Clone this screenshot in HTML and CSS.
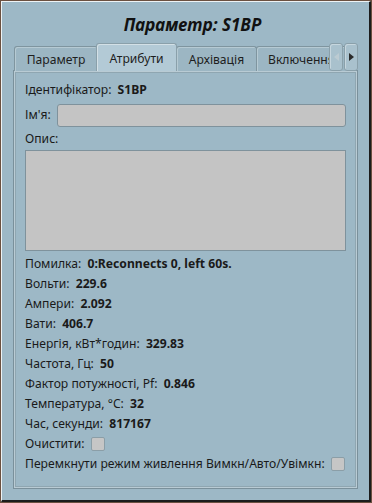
FILE: index.html
```html
<!DOCTYPE html>
<html lang="uk">
<head>
    <meta charset="UTF-8">
    <title>Параметр: S1BP</title>
    <link rel="stylesheet" href="styles.css">
</head>
<body>
    <div class="window">
        <div class="frame">
            <h1 class="title">Параметр: S1BP</h1>

            <div class="tabs">
                <div class="tab-bar">
                    <div class="tab first">Параметр</div>
                    <div class="tab active">Атрибути</div>
                    <div class="tab">Архівація</div>
                    <div class="tab clipped">Включення</div>
                    <div class="tab-scroll">
                        <button class="scroll-btn">
                            <svg width="5" height="8" viewBox="0 0 5 8"><path d="M5 0 L0 4 L5 8 Z" fill="#bccbd2"/></svg>
                        </button>
                        <button class="scroll-btn">
                            <svg width="5" height="8" viewBox="0 0 5 8"><path d="M0 0 L5 4 L0 8 Z" fill="#2a2a2a"/></svg>
                        </button>
                    </div>
                </div>

                <div class="pane">
                    <div class="row">Ідентифікатор: <b>S1BP</b></div>
                    <div class="row name-row">
                        <span>Ім'я:</span>
                        <div class="input"></div>
                    </div>
                    <div class="row">Опис:</div>
                    <div class="textarea"></div>
                    <div class="row">Помилка: <b>0:Reconnects 0, left 60s.</b></div>
                    <div class="row">Вольти: <b>229.6</b></div>
                    <div class="row">Ампери: <b>2.092</b></div>
                    <div class="row">Вати: <b>406.7</b></div>
                    <div class="row">Енергія, кВт*годин: <b>329.83</b></div>
                    <div class="row">Частота, Гц: <b>50</b></div>
                    <div class="row">Фактор потужності, Pf: <b>0.846</b></div>
                    <div class="row">Температура, °C: <b>32</b></div>
                    <div class="row">Час, секунди: <b>817167</b></div>
                    <div class="row check-row">Очистити: <span class="checkbox"></span></div>
                    <div class="row check-row">Перемкнути режим живлення Вимкн/Авто/Увімкн: <span class="checkbox"></span></div>
                </div>
            </div>
        </div>
    </div>
</body>
</html>
```

FILE: styles.css
```css
body {
    margin: 0;
    padding: 0;
    width: 372px;
    height: 503px;
    font-family: "Noto Sans", "DejaVu Sans", sans-serif;
    font-size: 12.15px;
    color: #1a1a1a;
    background: #9db8c6;
}

.window {
    width: 372px;
    height: 503px;
    box-sizing: border-box;
    border: 1px solid #6b5040;
}

.frame {
    height: 100%;
    box-sizing: border-box;
    border-top: 1px solid #eef3f5;
    border-left: 1px solid #eef3f5;
    border-right: 2px solid #1c1c1c;
    border-bottom: 2px solid #1c1c1c;
    background: #9db8c6;
    padding: 0 11px;
}

.title {
    margin: 0;
    height: 41px;
    line-height: 46px;
    padding-left: 14px;
    text-align: center;
    font-size: 17px;
    font-weight: bold;
    font-style: italic;
    color: #111;
}

/* вкладки */
.tab-bar {
    display: flex;
    align-items: flex-end;
    height: 28px;
    position: relative;
    z-index: 1;
    overflow: hidden;
}

.tab {
    flex-shrink: 0;
    height: 25px;
    box-sizing: border-box;
    width: 81px;
    margin-right: -1px;
    border: 1px solid #7f959f;
    border-bottom: none;
    border-radius: 3px 3px 0 0;
    background: #9cb6c3;
    box-shadow: inset 1px 1px 0 #b6cad3;
    text-align: center;
    line-height: 26px;
    color: #1e1e1e;
}

.tab.first {
    margin-left: 1px;
    width: 84px;
    margin-right: -2px;
}

.tab.active {
    height: 28px;
    line-height: 30px;
    width: 81px;
    background: #b3cad6;
    box-shadow: inset 1px 1px 0 #d3e0e6;
    border-color: #8aa0aa;
    position: relative;
    z-index: 2;
    margin-right: -1px;
}

.tab.clipped {
    width: 100px;
    white-space: nowrap;
    text-align: left;
    padding-left: 11px;
}

.tab-scroll {
    position: absolute;
    top: 0;
    right: 0;
    display: flex;
    gap: 1px;
    z-index: 3;
}

.scroll-btn {
    width: 14px;
    height: 28px;
    padding: 0;
    margin: 0;
    border: 1px solid #8aa0aa;
    border-radius: 3px;
    background: #a9c1cd;
    box-shadow: inset 1px 1px 0 #c6d6de;
    display: flex;
    align-items: center;
    justify-content: center;
}

.pane {
    height: 419px;
    margin-top: -1px;
    box-sizing: border-box;
    border: 1px solid #7a909b;
    box-shadow: inset 1px 1px 0 #b9cbd4, inset -1px -1px 0 #b9cbd4, inset 2px 2px 0 #8fa6b1, inset -2px -2px 0 #8fa6b1;
    padding: 9px 11px 0 11px;
}

.row {
    height: 20px;
    line-height: 20px;
    white-space: nowrap;
}

.row b {
    margin-left: 3px;
    font-weight: bold;
}

.name-row {
    display: flex;
    align-items: center;
    height: 24px;
    margin-top: 3px;
    margin-bottom: 2px;
}

.name-row span {
    width: 32px;
}

.input {
    flex: 1;
    height: 23px;
    box-sizing: border-box;
    border: 1px solid #7f929c;
    border-radius: 3px;
    background: #c4c4c4;
}

.textarea {
    height: 101px;
    box-sizing: border-box;
    border: 1px solid #7f929c;
    background: #c4c4c4;
    margin: 1px 0 3px 0;
}

.check-row {
    display: flex;
    align-items: center;
}

.checkbox {
    display: inline-block;
    width: 14px;
    height: 14px;
    margin-left: 6px;
    box-sizing: border-box;
    border: 1px solid #8b9ea7;
    border-radius: 2px;
    background: #c6c6c6;
}
```
